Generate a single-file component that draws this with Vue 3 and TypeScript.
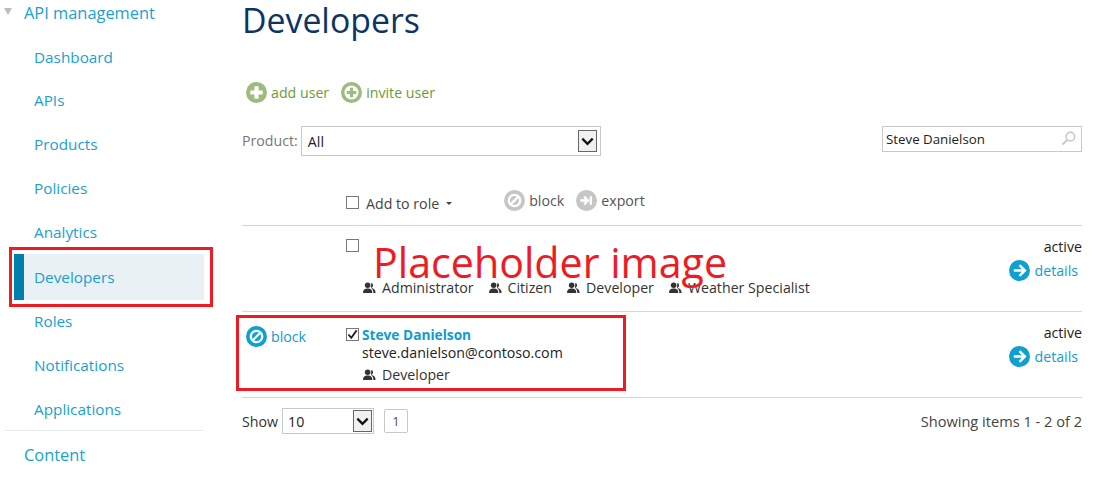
<script setup lang="ts">
const navItems: string[] = ['Dashboard', 'APIs', 'Products', 'Policies', 'Analytics', 'Developers', 'Roles', 'Notifications', 'Applications']
const roles: string[] = ['Administrator', 'Citizen', 'Developer', 'Weather Specialist']
</script>

<template>
  <div class="page">
    <aside class="side">
      <div class="top"><span class="tri"></span>API management</div>
      <ul class="nav">
        <li v-for="n in navItems" :key="n" :class="{ on: n === 'Developers' }">{{ n }}</li>
      </ul>
      <div class="content">Content</div>
    </aside>

    <main class="main">
      <h1>Developers</h1>
      <div class="actions">
        <span class="act">
          <svg class="ic" viewBox="0 0 22 22"><circle cx="11" cy="11" r="11" fill="#9dbb7c"/><path d="M11 4.5v13M4.5 11h13" stroke="#fff" stroke-width="4.4"/></svg>add user
        </span>
        <span class="act">
          <svg class="ic" viewBox="0 0 22 22"><circle cx="11" cy="11" r="11" fill="#9dbb7c"/><circle cx="11" cy="11" r="7.4" fill="#fff"/><path d="M11 6v10M6 11h10" stroke="#9dbb7c" stroke-width="3.2"/></svg>invite user
        </span>
      </div>

      <div class="filters">
        <label class="prod">Product:</label>
        <div class="select wide">All<span class="drop"><svg viewBox="0 0 18 18"><path d="M3.5 6l5.5 5.5L14.5 6" fill="none" stroke="#111" stroke-width="2.4"/></svg></span></div>
        <div class="search">Steve Danielson
          <svg viewBox="0 0 16 16"><circle cx="10" cy="6" r="4.6" fill="none" stroke="#c4c4c4" stroke-width="1.6"/><path d="M6.5 9.5L1.5 14.5" stroke="#c4c4c4" stroke-width="2"/></svg>
        </div>
      </div>

      <div class="bulk">
        <span class="cb"></span>
        <span class="role-menu">Add to role<i class="caret"></i></span>
        <span class="bulk-act">
          <svg class="ic" viewBox="0 0 22 22"><circle cx="11" cy="11" r="11" fill="#c6c6c6"/><circle cx="11" cy="11" r="6" fill="none" stroke="#fff" stroke-width="2.4"/><path d="M7 15l8-8" stroke="#fff" stroke-width="2.4"/></svg>block
        </span>
        <span class="bulk-act">
          <svg class="ic" viewBox="0 0 22 22"><circle cx="11" cy="11" r="11" fill="#c6c6c6"/><path d="M4.5 11h7M8.5 7l4 4-4 4" fill="none" stroke="#fff" stroke-width="2.4"/><path d="M15.5 6.5v9" stroke="#fff" stroke-width="2.4"/></svg>export
        </span>
      </div>

      <div class="row first">
        <div class="left"></div>
        <div class="mid">
          <span class="cb up"></span>
          <div class="info">
            <div class="spacer"></div>
            <div class="roles">
              <span v-for="r in roles" :key="r" class="role">
                <svg class="u" viewBox="0 0 14 13"><circle cx="5" cy="3.6" r="3" fill="#333"/><path d="M0 12c0-4 2-5 5-5s5 1 5 5z" fill="#333"/><path d="M9 .8a3 3 0 0 1 0 5.6c3 .4 4.6 2 4.6 5.6h-2.4c0-2.6-.8-4.4-2.6-5.4z" fill="#333"/></svg>{{ r }}
              </span>
            </div>
          </div>
        </div>
        <div class="right">
          <div>active</div>
          <div class="det">
            <svg class="ic" viewBox="0 0 22 22"><circle cx="11" cy="11" r="11" fill="#0f9fd0"/><path d="M5 11h11M11 5.4L16.6 11 11 16.6" fill="none" stroke="#fff" stroke-width="2.6"/></svg>details
          </div>
        </div>
      </div>

      <div class="row second">
        <div class="left">
          <span class="blk">
            <svg class="ic" viewBox="0 0 22 22"><circle cx="11" cy="11" r="11" fill="#0f9fd0"/><circle cx="11" cy="11" r="6" fill="none" stroke="#fff" stroke-width="2.4"/><path d="M7 15l8-8" stroke="#fff" stroke-width="2.4"/></svg>block
          </span>
        </div>
        <div class="mid">
          <span class="cb checked"><svg viewBox="0 0 12 12"><path d="M1.5 6l3.2 3.5L10.5 1.5" fill="none" stroke="#222" stroke-width="2"/></svg></span>
          <div class="info">
            <div class="name">Steve Danielson</div>
            <div class="mail">steve.danielson@contoso.com</div>
            <div class="roles one">
              <span class="role">
                <svg class="u" viewBox="0 0 14 13"><circle cx="5" cy="3.6" r="3" fill="#333"/><path d="M0 12c0-4 2-5 5-5s5 1 5 5z" fill="#333"/><path d="M9 .8a3 3 0 0 1 0 5.6c3 .4 4.6 2 4.6 5.6h-2.4c0-2.6-.8-4.4-2.6-5.4z" fill="#333"/></svg>Developer
              </span>
            </div>
          </div>
        </div>
        <div class="right">
          <div>active</div>
          <div class="det">
            <svg class="ic" viewBox="0 0 22 22"><circle cx="11" cy="11" r="11" fill="#0f9fd0"/><path d="M5 11h11M11 5.4L16.6 11 11 16.6" fill="none" stroke="#fff" stroke-width="2.6"/></svg>details
          </div>
        </div>
      </div>

      <div class="foot">
        <span class="show">Show</span>
        <div class="select small">10<span class="drop"><svg viewBox="0 0 18 18"><path d="M3.5 6l5.5 5.5L14.5 6" fill="none" stroke="#111" stroke-width="2.4"/></svg></span></div>
        <span class="pg">1</span>
        <span class="count">Showing items 1 - 2 of 2</span>
      </div>
    </main>

    <div class="mark m1"></div>
    <div class="mark m2"></div>
    <div class="ph">Placeholder image</div>
  </div>
</template>

<style scoped>
.page {
  position: relative;
  width: 1105px;
  height: 478px;
  overflow: hidden;
  display: flex;
  background: #fff;
  font-family: "Open Sans", "Noto Sans", sans-serif;
  font-size: 14.2px;
  color: #333;
}
.side {
  width: 200px;
  margin-left: 4px;
  flex: none;
  color: #1a9fd0;
  font-size: 15.3px;
}
.top {
  height: 26px;
  line-height: 26px;
  padding-left: 20px;
  position: relative;
  font-size: 16.4px;
}
.tri {
  position: absolute;
  left: 0;
  top: 8px;
  border-left: 4px solid transparent;
  border-right: 4px solid transparent;
  border-top: 7px solid #bdbdbd;
}
.nav {
  list-style: none;
  margin: 0;
  padding: 9px 0 0 10px;
}
.nav li {
  height: 44px;
  line-height: 44px;
  padding-left: 20px;
}
.nav li:nth-child(n+2) { line-height: 42px; }
.nav li:nth-child(n+7) { line-height: 44px; }
.nav li.on {
  height: 46px;
  margin: -1px 0 -1px 0;
  line-height: 46px;
  background: #e9f1f5;
  border-left: 10px solid #007fae;
  padding-left: 10px;
}
.content {
  border-top: 1px solid #e4ecf1;
  margin-top: -1px;
  padding-left: 20px;
  height: 48px;
  line-height: 48px;
  font-size: 16.4px;
}
.main {
  margin-left: 38px;
  width: 840px;
  flex: none;
}
h1 {
  margin: 0;
  font-weight: 400;
  font-size: 33.8px;
  line-height: 40px;
  color: #0c3564;
}
.actions {
  display: flex;
  gap: 12px;
  margin: 40px 0 0 4px;
  height: 24px;
  align-items: center;
  color: #6a9c3a;
}
.act { display: flex; align-items: center; gap: 4px; }
.ic { width: 21px; height: 21px; flex: none; }
.filters {
  display: flex;
  align-items: flex-start;
  margin-top: 22px;
  height: 30px;
}
.prod { color: #777; margin-right: 3px; line-height: 30px; }
.select {
  position: relative;
  border: 1px solid #c8c8c8;
  box-sizing: border-box;
  height: 30px;
  line-height: 29px;
  padding-left: 5px;
  color: #222;
}
.wide { width: 300px; padding-left: 6px; }
.drop {
  position: absolute;
  right: 3px;
  top: 3px;
  width: 19px;
  height: 22px;
  box-sizing: border-box;
  border: 1px solid #666;
  background: #f0f0f0;
  display: flex;
  align-items: center;
  justify-content: center;
}
.drop svg { width: 17px; height: 17px; }
.search {
  margin-left: auto;
  width: 200px;
  height: 26px;
  line-height: 24px;
  box-sizing: border-box;
  border: 1px solid #c8c8c8;
  padding-left: 3px;
  font-size: 13.3px;
  color: #222;
  position: relative;
}
.search svg { position: absolute; right: 5px; top: 4px; width: 15px; height: 15px; }
.bulk {
  display: flex;
  align-items: center;
  height: 24px;
  margin-top: 34px;
  padding-left: 104px;
  color: #555;
}
.cb {
  width: 11px;
  height: 11px;
  border: 1px solid #777;
  flex: none;
  box-sizing: content-box;
  display: block;
  background: #fff;
}
.cb.up { margin-top: -1px; }
.cb.checked { margin-top: 2px; }
.cb.checked svg { display: block; width: 11px; height: 11px; }
.role-menu { margin-left: 7px; margin-right: 52px; padding-top: 2px; display: flex; align-items: center; color: #444; }
.caret {
  margin-left: 7px;
  border-left: 3px solid transparent;
  border-right: 3px solid transparent;
  border-top: 3px solid #444;
}
.bulk-act { display: flex; align-items: center; gap: 4px; margin-top: -3px; }
.bulk-act + .bulk-act { margin-left: 12px; }
.row {
  display: flex;
  border-top: 1px solid #d6d6d6;
  height: 85px;
  box-sizing: content-box;
  position: relative;
}
.row.first { margin-top: 11px; }
.left { width: 104px; flex: none; }
.mid { flex: 1; display: flex; padding-top: 14px; }
.info { margin-left: 3px; flex: 1; }
.spacer { height: 38px; }
.roles { display: flex; gap: 15px; line-height: 20px; margin-left: 1px; color: #333; }
.roles.one { margin-top: 3px; }
.role { display: flex; align-items: center; gap: 6px; white-space: nowrap; }
.u { width: 13px; height: 12px; flex: none; }
.name { color: #129bcd; font-weight: 700; line-height: 18px; font-size: 13.7px; }
.mail { line-height: 18px; color: #222; }
.right {
  width: 120px;
  text-align: right;
  padding-top: 11px;
  color: #222;
  line-height: 20px;
  flex: none;
}
.det {
  display: flex;
  justify-content: flex-end;
  align-items: center;
  gap: 4px;
  color: #129bcd;
  margin-top: 3px;
  padding-right: 4px;
}
.blk {
  display: flex;
  align-items: center;
  gap: 4px;
  color: #129bcd;
  margin: 14px 0 0 4px;
}
.foot {
  display: flex;
  align-items: center;
  border-top: 1px solid #d6d6d6;
  height: 46px;
}
.show { margin-right: 4px; }
.small { width: 92px; height: 26px; line-height: 25px; }
.small .drop { top: 1px; right: 1px; }
.pg {
  margin-left: 10px;
  width: 24px;
  height: 24px;
  line-height: 22px;
  box-sizing: border-box;
  border: 1px solid #c8c8c8;
  border-radius: 2px;
  text-align: center;
  font-size: 13px;
  color: #555;
}
.count { margin-left: auto; color: #444; font-size: 14.6px; }
.mark { position: absolute; border: 3px solid #ed1c24; box-sizing: border-box; }
.m1 { left: 9px; top: 247px; width: 204px; height: 60px; }
.m2 { left: 236px; top: 315px; width: 390px; height: 76px; }
.ph {
  position: absolute;
  left: 373px;
  top: 237px;
  font-size: 41.2px;
  line-height: 50px;
  color: #ed1c24;
  font-family: "Open Sans", sans-serif;
}
</style>
